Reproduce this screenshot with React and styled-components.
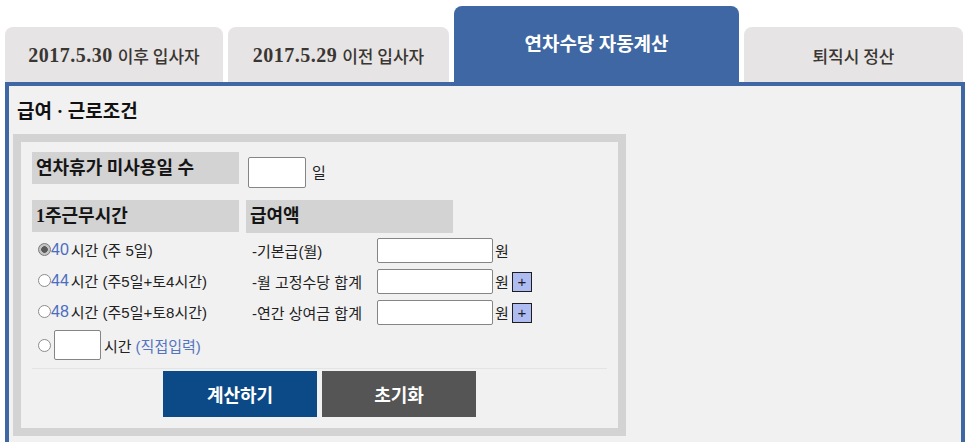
import styled, { createGlobalStyle, css } from "styled-components";

const GlobalStyle = createGlobalStyle`
  html, body {
    margin: 0;
    background: #ffffff;
  }
  body {
    font-family: "Liberation Sans", "Noto Sans CJK KR", sans-serif;
    color: #222222;
  }
`;

const Page = styled.div`
  padding: 6px 0 0 5px;
  width: 960px;
`;

const TabBar = styled.div`
  display: flex;
  align-items: flex-end;
  gap: 5px;
  height: 76px;
`;

const Tab = styled.div`
  width: ${(p) => p.$w}px;
  height: 55px;
  box-sizing: border-box;
  padding-top: 2px;
  border-radius: 8px 8px 0 0;
  background: #e6e4e4;
  color: #3a3632;
  display: flex;
  align-items: center;
  justify-content: center;
  font-family: "Noto Sans CJK KR", sans-serif;
  font-size: 17px;
  font-weight: 500;
  ${(p) =>
    p.$active &&
    css`
      height: 76px;
      padding: 0 0 4px;
      background: #3f67a3;
      color: #ffffff;
      font-size: 19px;
      font-weight: 700;
    `}
`;

const TabDate = styled.span`
  font-family: "Liberation Serif", serif;
  font-size: 20px;
  font-weight: 700;
  letter-spacing: 0.5px;
  margin-right: 5px;
`;

const Panel = styled.div`
  box-sizing: border-box;
  width: 960px;
  border: 4px solid #3f67a3;
  background: #f1f1f1;
  padding: 14px 0 24px 4px;
`;

const Heading = styled.h2`
  margin: 0 0 10px 4px;
  font-family: "Liberation Serif", "Noto Sans CJK KR", serif;
  font-size: 19px;
  font-weight: 700;
  line-height: 24px;
  color: #111111;
`;

const Frame = styled.div`
  box-sizing: border-box;
  width: 613px;
  border: 8px solid #d3d3d3;
  padding: 10px 11px 11px;
  background: #f1f1f1;
`;

const TopRow = styled.div`
  display: flex;
  align-items: flex-start;
  margin-bottom: 12px;
`;

const LabelBox = styled.div`
  width: 207px;
  height: ${(p) => p.$h || 32}px;
  box-sizing: border-box;
  padding-left: 4px;
  background: #d3d3d3;
  font-family: "Liberation Serif", "Noto Sans CJK KR", serif;
  font-size: 18px;
  font-weight: 700;
  line-height: ${(p) => p.$h || 32}px;
  color: #151515;
`;

const TextInput = styled.input`
  box-sizing: border-box;
  width: ${(p) => p.$w}px;
  height: ${(p) => p.$h}px;
  margin: 0;
  border: 1px solid #858585;
  border-radius: 2px;
  background: #ffffff;
  flex: none;
`;

const DaysInput = styled(TextInput)`
  margin: 5px 6px 0 9px;
`;

const Unit = styled.span`
  font-family: "Noto Sans CJK KR", sans-serif;
  font-size: 15px;
  color: #222222;
  align-self: center;
  margin-top: 3px;
`;

const Columns = styled.div`
  display: grid;
  grid-template-columns: 207px 1fr;
  column-gap: 7px;
`;

const Column = styled.div`
  display: flex;
  flex-direction: column;
`;

const List = styled.div`
  margin-top: 2px;
  display: flex;
  flex-direction: column;
`;

const RadioRow = styled.label`
  display: flex;
  align-items: center;
  height: ${(p) => p.$h || 31}px;
  margin-top: ${(p) => p.$mt || 0}px;
  padding-left: 6px;
  font-family: "Liberation Sans", "Noto Sans CJK KR", sans-serif;
  font-size: 15px;
  color: #222222;
  white-space: nowrap;
`;

const Radio = styled.span`
  width: 13px;
  height: 13px;
  box-sizing: border-box;
  border-radius: 50%;
  border: 1px solid #8c8c8c;
  background: #ffffff;
  flex: none;
  ${(p) =>
    p.$checked &&
    css`
      background: radial-gradient(circle, #5a5a5a 0 3px, #c4c4c4 3.6px);
      border-color: #7a7a7a;
    `}
`;

const Hours = styled.span`
  font-family: "Liberation Sans", sans-serif;
  font-size: 16px;
  color: #4a6cc0;
  margin-right: 2px;
`;

const Direct = styled.span`
  color: #5474c0;
  margin-left: 4px;
`;

const HoursInput = styled(TextInput)`
  margin: 0 3px 0 3px;
`;

const FieldRow = styled.div`
  display: flex;
  align-items: center;
  height: 31px;
  padding-left: 6px;
  font-family: "Liberation Sans", "Noto Sans CJK KR", sans-serif;
  font-size: 15px;
  color: #222222;
`;

const FieldLabel = styled.span`
  width: 125px;
  flex: none;
`;

const Won = styled.span`
  margin-left: 2px;
`;

const PlusButton = styled.button`
  width: 20px;
  height: 20px;
  margin-left: 3px;
  padding: 0;
  border: 1px solid #1d1d1d;
  background: #aebcf2;
  color: #1d1d1d;
  font-family: "Liberation Sans", sans-serif;
  font-size: 15px;
  line-height: 17px;
`;

const Actions = styled.div`
  margin-top: 8px;
  padding-top: 2px;
  border-top: 1px solid #e4e4e4;
  display: flex;
  justify-content: center;
  gap: 5px;
`;

const ActionButton = styled.button`
  width: 154px;
  height: 46px;
  border: none;
  background: ${(p) => (p.$dark ? "#555555" : "#0b4a86")};
  color: #ffffff;
  font-family: "Noto Sans CJK KR", sans-serif;
  font-size: 18px;
  font-weight: 700;
`;

const hours = [
  { h: "40", text: "시간 (주 5일)", checked: true },
  { h: "44", text: "시간 (주5일+토4시간)" },
  { h: "48", text: "시간 (주5일+토8시간)" },
];

const pay = [
  { label: "-기본급(월)" },
  { label: "-월 고정수당 합계", plus: true },
  { label: "-연간 상여금 합계", plus: true },
];

export default function App() {
  return (
    <Page>
      <GlobalStyle />
      <TabBar>
        <Tab $w={218}>
          <TabDate>2017.5.30</TabDate>이후 입사자
        </Tab>
        <Tab $w={221}>
          <TabDate>2017.5.29</TabDate>이전 입사자
        </Tab>
        <Tab $w={285} $active>
          연차수당 자동계산
        </Tab>
        <Tab $w={219}>퇴직시 정산</Tab>
      </TabBar>
      <Panel>
        <Heading>급여 · 근로조건</Heading>
        <Frame>
          <TopRow>
            <LabelBox>연차휴가 미사용일 수</LabelBox>
            <DaysInput $w={58} $h={31} />
            <Unit>일</Unit>
          </TopRow>
          <Columns>
            <Column>
              <LabelBox>1주근무시간</LabelBox>
              <List>
                {hours.map((r) => (
                  <RadioRow key={r.h}>
                    <Radio $checked={r.checked} />
                    <Hours>{r.h}</Hours>
                    {r.text}
                  </RadioRow>
                ))}
                <RadioRow $h={30} $mt={3}>
                  <Radio />
                  <HoursInput $w={47} $h={30} />
                  시간<Direct>(직접입력)</Direct>
                </RadioRow>
              </List>
            </Column>
            <Column>
              <LabelBox $h={33}>급여액</LabelBox>
              <List>
                {pay.map((r) => (
                  <FieldRow key={r.label}>
                    <FieldLabel>{r.label}</FieldLabel>
                    <TextInput $w={116} $h={25} />
                    <Won>원</Won>
                    {r.plus && <PlusButton>+</PlusButton>}
                  </FieldRow>
                ))}
              </List>
            </Column>
          </Columns>
          <Actions>
            <ActionButton>계산하기</ActionButton>
            <ActionButton $dark>초기화</ActionButton>
          </Actions>
        </Frame>
      </Panel>
    </Page>
  );
}
